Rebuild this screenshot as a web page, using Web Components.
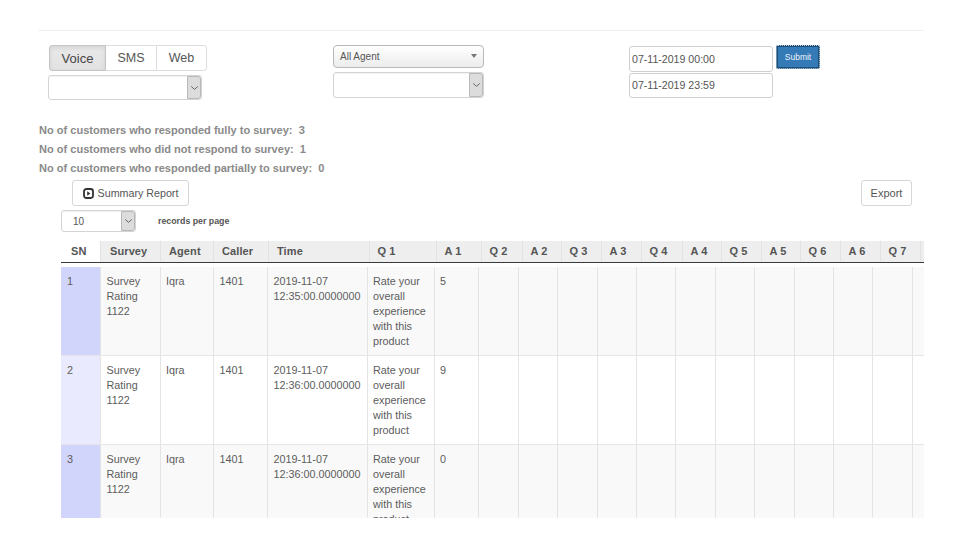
<!DOCTYPE html>
<html><head><meta charset="utf-8"><title>Survey</title>
<style>
html,body{margin:0;padding:0;background:#fff;font-family:"Liberation Sans",Arial,sans-serif;color:#555;}
body{width:967px;height:534px;overflow:hidden}
</style></head><body>
<survey-page></survey-page>
<script>
const FONT='"Liberation Sans",Arial,sans-serif';
const def=(name,css,html)=>{customElements.define(name,class extends HTMLElement{
  connectedCallback(){ if(this.shadowRoot) return; const r=this.attachShadow({mode:'open'});
    r.innerHTML=`<style>${css}</style>${typeof html==='function'?html(this):html}`; }
});};
const chev=`<svg width="9" height="6" viewBox="0 0 9 6"><path d="M1.2 1.4 4.5 4.4 7.8 1.4" fill="none" stroke="#666" stroke-width="1"/></svg>`;

def('seg-tabs',`:host{display:flex;width:158px;height:26px;box-sizing:border-box;font:13px ${FONT};color:#555}
 span{display:flex;align-items:center;justify-content:center;box-sizing:border-box;border:1px solid #ddd;margin-left:-1px;background:#fff}
 .a{width:57px;margin-left:0;background:linear-gradient(#e9e9e9,#e2e2e2);border-color:#c4c4c4;border-radius:3px 0 0 3px;box-shadow:inset 0 2px 4px rgba(0,0,0,.09);color:#444;position:relative}
 .b{width:52px;font-size:12.5px}.c{width:51px;border-radius:0 3px 3px 0;font-size:12.5px}`,
 `<span class="a">Voice</span><span class="b">SMS</span><span class="c">Web</span>`);

def('combo-box',`:host{display:flex;box-sizing:border-box;border:1px solid #d4d4d4;border-radius:3px;background:#fff;height:var(--h,25px);width:var(--w,154px);font:11px ${FONT};color:#555;box-shadow:inset 0 1px 1px rgba(0,0,0,.05)}
 .v{flex:1;display:flex;align-items:center;padding-left:var(--pl,0)}
 .b{width:14px;margin:0;box-sizing:border-box;background:#dcdcdc;border:1px solid #b9b9b9;border-radius:0 3px 3px 0;display:flex;align-items:center;justify-content:center}`,
 `<div class="v"><slot></slot></div><div class="b">${chev}</div>`);

def('agent-drop',`:host{display:flex;align-items:center;justify-content:space-between;box-sizing:border-box;width:151px;height:23px;padding:0 6px 1px 6px;border:1px solid #b8b8b8;border-radius:4px;background:linear-gradient(#fff,#ececec);font:10px ${FONT};color:#555}
 i{width:0;height:0;border:3.5px solid transparent;border-top:4px solid #777;border-bottom:0}`,
 `<slot></slot><i></i>`);

def('date-field',`:host{display:flex;align-items:center;box-sizing:border-box;width:144px;height:var(--h,26px);padding:0 0 var(--pb,0) 2px;border:1px solid #d0d0d0;border-radius:3px;background:#fff;font:10.6px ${FONT};color:#555}`,`<slot></slot>`);

def('ui-button',`:host{display:inline-flex;align-items:center;justify-content:center;gap:4px;box-sizing:border-box;height:26px;border:1px solid #d6d6d6;border-radius:3px;background:#fff;font:var(--fs,10.7px) ${FONT};color:#555}`,`<slot></slot>`);

def('submit-button',`:host{display:flex;box-sizing:border-box;width:44px;height:24px;border:1px dotted #c6d6e4;border-radius:2px;background:#1d4c75;font:8.5px ${FONT};color:#f0f4f8}
 div{flex:1;display:flex;align-items:center;justify-content:center;background:#337ab7;margin:1px}`,`<div><slot></slot></div>`);

def('stat-line',`:host{display:block;height:19px;font:bold 11.05px/19px ${FONT};color:#8a8a8a;white-space:pre}`,`<slot></slot>`);

const HEAD=[61,100,160,213,268,369,436,481,522,561,601,641,682,721,761,800,840,880,920,960];
const BODY=[61,100,159.5,213,267,366.5,433.5,478,518,557,596.5,635.5,675,714.5,754,793.5,833,872,911.5,951];
const cols=a=>a.slice(1).map((x,i)=>(x-a[i])+'px').join(' ');
const HN=['SN','Survey','Agent','Caller','Time','Q 1','A 1','Q 2','A 2','Q 3','A 3','Q 4','A 4','Q 5','A 5','Q 6','A 6','Q 7',''];
const ROWS=[['1','Survey Rating 1122','Iqra','1401','2019-11-07 12:35:00.0000000','5'],
            ['2','Survey Rating 1122','Iqra','1401','2019-11-07 12:36:00.0000000','9'],
            ['3','Survey Rating 1122','Iqra','1401','2019-11-07 12:36:00.0000000','0']];
const Q='Rate your overall experience with this product';
def('data-grid',`:host{display:block;width:863px;height:277px;overflow:hidden;font:10.8px ${FONT};color:#5c5c5c}
 .h,.r{display:grid;width:max-content}
 .h{grid-template-columns:${cols(HEAD)};border-bottom:2px solid #3a3a3a;height:20px}
 .h div{background:#eee;border-left:1px solid #e2e2e2;font-size:11px;font-weight:bold;color:#555;line-height:21px;padding-left:8px;box-sizing:border-box;white-space:nowrap;letter-spacing:.1px}
 .h div:first-child{background:#fff;border-left:0;padding-left:10px}
 .h div:nth-child(2){padding-left:9px}
 .h div:nth-child(n+6){padding-left:7.5px}
 .b{margin-top:4px}
 .r{grid-template-columns:${cols(BODY)};height:89px}
 .r div{box-sizing:border-box;border-left:1px solid #e4e4e4;border-bottom:1px solid #e4e4e4;padding:7px 0 0 5.5px;line-height:15px;overflow:hidden}
 .r div:first-child{border-left:0;padding-left:6px}
 .o div{background:#f9f9f9}.e div{background:#fff}
 .o div:first-child{background:#d2d5fb}.e div:first-child{background:#e9eafd}`,
 ()=>{
  const head=HN.map(t=>`<div>${t}</div>`).join('');
  const rows=ROWS.map((r,i)=>{
    let c=r.slice(0,5).map(t=>`<div>${t}</div>`).join('')+`<div>${Q}</div><div>${r[5]}</div>`;
    for(let k=0;k<12;k++)c+='<div></div>';
    return `<div class="r ${i%2?'e':'o'}">${c}</div>`;}).join('');
  return `<div class="h">${head}</div><div class="b">${rows}</div>`;
 });

def('survey-page',`:host{display:block;font:12px ${FONT}}
 .rule{margin:30px 43px 0 38px;border-top:1px solid #f1f1f1}
 .filters{display:grid;grid-template-columns:285px 296px auto;padding:14px 0 0 48px;height:54px}
 .stack{display:flex;flex-direction:column;align-items:flex-start}
 .c1 seg-tabs{margin-left:1px}.c1 combo-box{margin-top:4px}
 .c2 combo-box{margin-top:4px;--h:26px;--w:151px}
 .c3{display:grid;grid-template-columns:144px auto;column-gap:3px;grid-template-rows:27px 26px;padding-top:1px}
 .stats{padding:22px 0 0 39px}
 .tools{display:flex;justify-content:space-between;margin:2px 55px 0 72px}
 .sum{width:117px}.exp{width:51px;--fs:11px}
 .rec{display:flex;align-items:center;margin:4px 0 0 61px;height:22px;gap:22px;font:bold 8.8px ${FONT};color:#555}
 .rec combo-box{--w:75px;--h:22px;--pl:11px;font-size:10px}
 data-grid{margin:9px 0 0 61px}`,
 `<div class="rule"></div>
 <div class="filters">
  <div class="stack c1"><seg-tabs></seg-tabs><combo-box></combo-box></div>
  <div class="stack c2"><agent-drop>All Agent</agent-drop><combo-box></combo-box></div>
  <div class="c3"><date-field>07-11-2019 00:00</date-field><submit-button style="margin-top:-1px">Submit</submit-button><date-field style="--h:25px;--pb:1px">07-11-2019 23:59</date-field></div>
 </div>
 <div class="stats">
  <stat-line>No of customers who responded fully to survey:  3</stat-line>
  <stat-line>No of customers who did not respond to survey:  1</stat-line>
  <stat-line>No of customers who responded partially to survey:  0</stat-line>
 </div>
 <div class="tools">
  <ui-button class="sum"><svg width="11" height="11" viewBox="0 0 11 11"><rect x="1" y="1" width="9" height="9" rx="2.4" fill="none" stroke="#333" stroke-width="1.8"/><path d="M4.2 3.3 7.4 5.5 4.2 7.7Z" fill="#333"/></svg>Summary Report</ui-button>
  <ui-button class="exp">Export</ui-button>
 </div>
 <div class="rec"><combo-box>10</combo-box><span>records per page</span></div>
 <data-grid></data-grid>`);
</script>
</body></html>
